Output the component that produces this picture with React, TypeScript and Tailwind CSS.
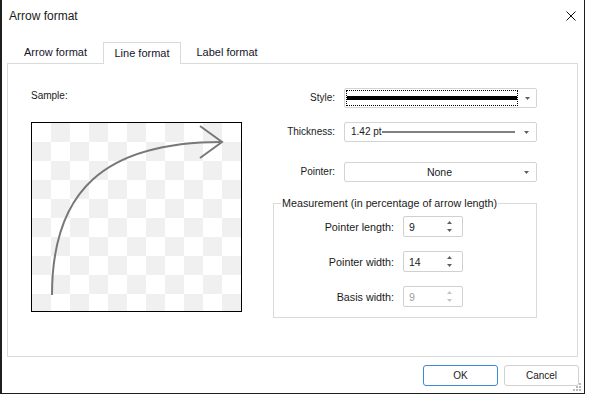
import React from "react";

/* Arrow format dialog — "Line format" tab */

function Caret({ up, color = "#606060" }: { up?: boolean; color?: string }) {
  return (
    <svg width="5" height="3" viewBox="0 0 5 3">
      <path d={up ? "M0 3h5L2.5 0z" : "M0 0h5L2.5 3z"} fill={color} />
    </svg>
  );
}

function Combo({ children }: { children: React.ReactNode }) {
  return (
    <div className="ml-[9px] w-[193px] h-[20px] flex items-center border border-[#d4d4d4] rounded-[2px] bg-white">
      <div className="flex-1 h-full flex items-center">{children}</div>
      <div className="w-[20px] flex justify-center">
        <Caret />
      </div>
    </div>
  );
}

function Spin({ label, value, disabled }: { label: string; value: string; disabled?: boolean }) {
  const arrow = disabled ? "#c4c4c4" : "#606060";
  return (
    <div className="flex items-center h-[21px]">
      <div className="w-[120px] text-right text-[10.75px] leading-[12px]">{label}</div>
      <div className="ml-[9px] w-[60px] h-[21px] flex items-center border border-[#d0d0d0] rounded-[2px] bg-white">
        <span className={`flex-1 pl-[5px] text-[10.5px] leading-[12px] ${disabled ? "text-[#a0a0a0]" : "text-[#1a1a1a]"}`}>
          {value}
        </span>
        <div className="w-[14px] mr-[6px] flex flex-col items-center gap-[5px]">
          <Caret up color={arrow} />
          <Caret color={arrow} />
        </div>
      </div>
    </div>
  );
}

export default function App() {
  return (
    <div className="w-[599px] h-[395px] bg-white font-['Liberation_Sans',Arial,sans-serif] text-[#1a1a1a]">
      <div className="relative w-[585px] h-[394px] border-l-2 border-r border-b border-[#1f1f1f] bg-white flex flex-col">
        {/* Title bar */}
        <div className="h-[31px] flex items-center justify-between pl-[7px] pr-[8px]">
          <span className="text-[12px] leading-[14px]">Arrow format</span>
          <svg width="10" height="10" viewBox="0 0 10 10">
            <path d="M0.5 0.5l9 9M9.5 0.5l-9 9" stroke="#111" strokeWidth="1" />
          </svg>
        </div>

        {/* Tabs */}
        <div className="relative z-10 mt-[11px] ml-[6px] flex items-end h-[21px] text-[11px] leading-[13px] text-[#14142b]">
          <div className="w-[95px] h-[21px] flex items-center justify-center">Arrow format</div>
          <div className="w-[78px] h-[22px] -mb-px bg-white border border-b-0 border-[#dadada] flex items-center justify-center">
            Line format
          </div>
          <div className="w-[92px] h-[21px] flex items-center justify-center">Label format</div>
        </div>

        {/* Panel */}
        <div className="ml-[5px] w-[571px] h-[294px] border border-[#dadada] flex pl-[23px]">
          {/* Sample */}
          <div className="w-[211px] pt-[26px]">
            <div className="text-[10px] leading-[12px]">Sample:</div>
            <div className="mt-[20px] w-[211px] h-[190px] border border-black">
              <svg width="209" height="188" viewBox="0 0 209 188" className="block">
                <defs>
                  <pattern id="chk" width="38" height="38" patternUnits="userSpaceOnUse">
                    <rect width="38" height="38" fill="#fff" />
                    <rect x="19" width="19" height="19" fill="#f0f0f0" />
                    <rect y="19" width="19" height="19" fill="#f0f0f0" />
                  </pattern>
                </defs>
                <rect width="209" height="188" fill="url(#chk)" />
                <path d="M20 172C20 68 72 19 190 19" fill="none" stroke="#787878" strokeWidth="2" />
                <path d="M168 3L190 19L168 35" fill="none" stroke="#787878" strokeWidth="2" />
              </svg>
            </div>
          </div>

          {/* Settings */}
          <div className="ml-[31px] w-[264px] pt-[24px] text-[10px] leading-[12px]">
            <div className="flex items-center h-[20px]">
              <div className="w-[62px] text-right">Style:</div>
              <Combo>
                <div className="ml-[1px] w-[172px] h-[16px] border border-dotted border-black flex items-center">
                  <div className="w-full h-[4px] bg-black" />
                </div>
              </Combo>
            </div>

            <div className="mt-[14px] flex items-center h-[20px]">
              <div className="w-[62px] text-right">Thickness:</div>
              <Combo>
                <span className="pl-[6px]">1.42 pt</span>
                <div className="flex-1 h-[2px] bg-[#808080] mr-[1px]" />
              </Combo>
            </div>

            <div className="mt-[20px] flex items-center h-[20px]">
              <div className="w-[62px] text-right">Pointer:</div>
              <Combo>
                <span className="flex-1 pl-[18px] text-center text-[10.5px]">None</span>
              </Combo>
            </div>

            <fieldset className="mt-[15px] w-[264px] border border-[#dadada] pt-[7px] pb-[10px] flex flex-col gap-[14px]">
              <legend className="ml-[7px] px-[1px] text-[10.75px] leading-[12px]">
                Measurement (in percentage of arrow length)
              </legend>
              <Spin label="Pointer length:" value="9" />
              <Spin label="Pointer width:" value="14" />
              <Spin label="Basis width:" value="9" disabled />
            </fieldset>
          </div>
        </div>

        {/* Buttons */}
        <div className="mt-[8px] flex justify-end gap-[6px] pr-[5px] text-[10px] leading-[12px]">
          <button className="w-[75px] h-[21px] bg-white border border-[#3d8bd4] rounded-[3px]">OK</button>
          <button className="w-[75px] h-[21px] bg-white border border-[#d0d0d0] rounded-[3px]">Cancel</button>
        </div>

        {/* Resize grip */}
        <svg width="10" height="10" viewBox="0 0 10 10" className="absolute right-[3px] bottom-[1px]">
          {[
            [8, 1],
            [5, 4],
            [8, 4],
            [2, 7],
            [5, 7],
            [8, 7],
          ].map(([x, y]) => (
            <rect key={`${x}-${y}`} x={x} y={y} width="2" height="2" fill="#b8b8b8" />
          ))}
        </svg>
      </div>
    </div>
  );
}
